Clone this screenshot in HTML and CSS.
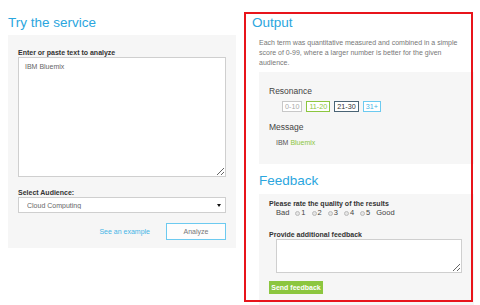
FILE: index.html
```html
<!DOCTYPE html>
<html lang="en">
<head>
    <meta charset="UTF-8">
    <meta name="viewport" content="width=device-width, initial-scale=1.0">
    <title>Try the service</title>
    <link rel="stylesheet" href="styles.css">
</head>
<body>

<div class="page">
    <section class="try">
        <h2 class="title">Try the service</h2>
        <form class="panel try-form">
            <label for="text">Enter or paste text to analyze</label>
            <textarea id="text">IBM Bluemix</textarea>

            <label for="audience" class="label-audience">Select Audience:</label>
            <div class="select-wrap">
                <select id="audience">
                    <option>Cloud Computing</option>
                </select>
            </div>

            <div class="actions">
                <a href="#" class="example">See an example</a>
                <button type="button" class="analyze">Analyze</button>
            </div>
        </form>
    </section>

    <section class="output">
        <h2 class="title">Output</h2>
        <p class="desc">Each term was quantitative measured and combined in a simple score of 0-99, where a larger number is better for the given audience.</p>

        <div class="panel result">
            <h3>Resonance</h3>
            <div class="scale">
                <span class="range r1">0-10</span>
                <span class="range r2">11-20</span>
                <span class="range r3">21-30</span>
                <span class="range r4">31+</span>
            </div>
            <h3 class="msg-head">Message</h3>
            <p class="msg">IBM <span class="hl">Bluemix</span></p>
        </div>

        <h2 class="title feedback-title">Feedback</h2>
        <form class="panel feedback">
            <label>Please rate the quality of the results</label>
            <div class="rate">
                <span>Bad</span>
                <label><input type="radio" name="quality" value="1">1</label>
                <label><input type="radio" name="quality" value="2">2</label>
                <label><input type="radio" name="quality" value="3">3</label>
                <label><input type="radio" name="quality" value="4">4</label>
                <label><input type="radio" name="quality" value="5">5</label>
                <span class="good">Good</span>
            </div>

            <label for="comment" class="label-comment">Provide additional feedback</label>
            <textarea id="comment"></textarea>

            <button type="button" class="send">Send feedback</button>
        </form>
    </section>
</div>

<div class="highlight"></div>

</body>
</html>
```

FILE: styles.css
```css
html, body {
    overflow: hidden;
}

body {
    margin: 0;
    font-family: 'Liberation Sans', Arial, sans-serif;
    background-color: #fff;
    color: #333;
}

.page {
    display: flex;
    gap: 16px;
    padding: 15px 0 0 8px;
}

.title {
    margin: 0;
    font-size: 13.5px;
    line-height: 16px;
    font-weight: normal;
    color: #2ba6de;
}

.panel {
    background-color: #f6f6f6;
}

/* left column */

.try {
    width: 228px;
}

.try-form {
    margin-top: 4px;
    padding: 13px 10px 8px;
}

label {
    display: block;
    font-size: 7px;
    line-height: 9px;
    font-weight: bold;
    color: #333;
}

textarea {
    display: block;
    box-sizing: border-box;
    margin: 0;
    border: 1px solid #cfcfcf;
    background-color: #fff;
    font-family: 'Liberation Sans', Arial, sans-serif;
}

.try-form textarea {
    width: 208px;
    height: 120px;
    padding: 4px 6px;
    font-size: 7px;
    line-height: 9px;
    color: #666;
}

.label-audience {
    margin-top: 11px;
}

.select-wrap {
    position: relative;
}

.select-wrap::after {
    content: "";
    position: absolute;
    right: 5px;
    top: 7px;
    border-left: 2px solid transparent;
    border-right: 2px solid transparent;
    border-top: 3px solid #111;
}

select {
    display: block;
    appearance: none;
    -webkit-appearance: none;
    width: 208px;
    height: 16px;
    margin: 0;
    padding: 0 8px;
    border: 1px solid #cfcfcf;
    border-radius: 0;
    background-color: #fff;
    font-family: 'Liberation Sans', Arial, sans-serif;
    font-size: 7px;
    color: #666;
}

.actions {
    display: flex;
    justify-content: flex-end;
    align-items: center;
    gap: 16px;
    margin-top: 10px;
}

.example {
    font-size: 7px;
    color: #45b5e6;
    text-decoration: none;
}

.analyze {
    width: 60px;
    height: 17px;
    padding: 0;
    border: 1px solid #6ccaf0;
    background-color: #fdfdfd;
    font-family: 'Liberation Sans', Arial, sans-serif;
    font-size: 7px;
    color: #777;
}

/* right column */

.output {
    width: 222px;
}

.desc {
    width: 206px;
    margin: 7px 0 0 7px;
    font-size: 7px;
    line-height: 10px;
    color: #777;
}

.result {
    margin: 4px 0 0 7px;
    padding: 14px 10px 16px;
}

.result h3 {
    margin: 0;
    font-size: 8.5px;
    line-height: 11px;
    font-weight: normal;
    color: #444;
}

.scale {
    display: flex;
    gap: 4px;
    margin: 4px 0 0 13px;
}

.range {
    padding: 0 2px;
    font-size: 7.2px;
    line-height: 9px;
    border: 1px solid;
    background-color: #fff;
}

.r1 {
    color: #aaa;
    border-color: #c8c8c8;
}

.r2 {
    color: #8cc63f;
    border-color: #8cc63f;
}

.r3 {
    color: #333;
    border-color: #4a6475;
}

.r4 {
    color: #45b5e6;
    border-color: #6ccaf0;
}

.result .msg-head {
    margin-top: 10px;
}

.msg {
    margin: 5px 0 0 7px;
    font-size: 7px;
    line-height: 10px;
    color: #555;
}

.msg .hl {
    color: #8cc63f;
}

.feedback-title {
    margin: 9px 0 0 7px;
}

.feedback {
    margin: 5px 0 0 7px;
    padding: 5px 10px 20px;
}

.rate {
    display: flex;
    align-items: center;
    margin: 0 0 0 7px;
    font-size: 7.5px;
    line-height: 10px;
    color: #444;
}

.rate label {
    display: flex;
    align-items: center;
    margin-left: 6px;
    font-size: 7.5px;
    line-height: 10px;
    font-weight: normal;
    color: #444;
}

.rate input {
    appearance: none;
    -webkit-appearance: none;
    box-sizing: border-box;
    width: 5px;
    height: 5px;
    margin: 0 1px 0 0;
    border: 1px solid #bbb;
    border-radius: 50%;
    background-color: #e4e4e4;
}

.rate .good {
    margin-left: 6px;
}

.label-comment {
    margin-top: 12px;
}

.feedback textarea {
    width: 186px;
    height: 34px;
    margin-left: 7px;
}

.send {
    display: block;
    width: 54px;
    height: 13px;
    margin-top: 8px;
    padding: 0;
    border: none;
    background-color: #8cc63f;
    font-family: 'Liberation Sans', Arial, sans-serif;
    font-size: 7px;
    font-weight: bold;
    color: #fff;
}

/* red marker round the output column */

.highlight {
    position: absolute;
    left: 244px;
    top: 12px;
    width: 229px;
    height: 290px;
    box-sizing: border-box;
    border: 2px solid #e8141b;
    pointer-events: none;
}
```
